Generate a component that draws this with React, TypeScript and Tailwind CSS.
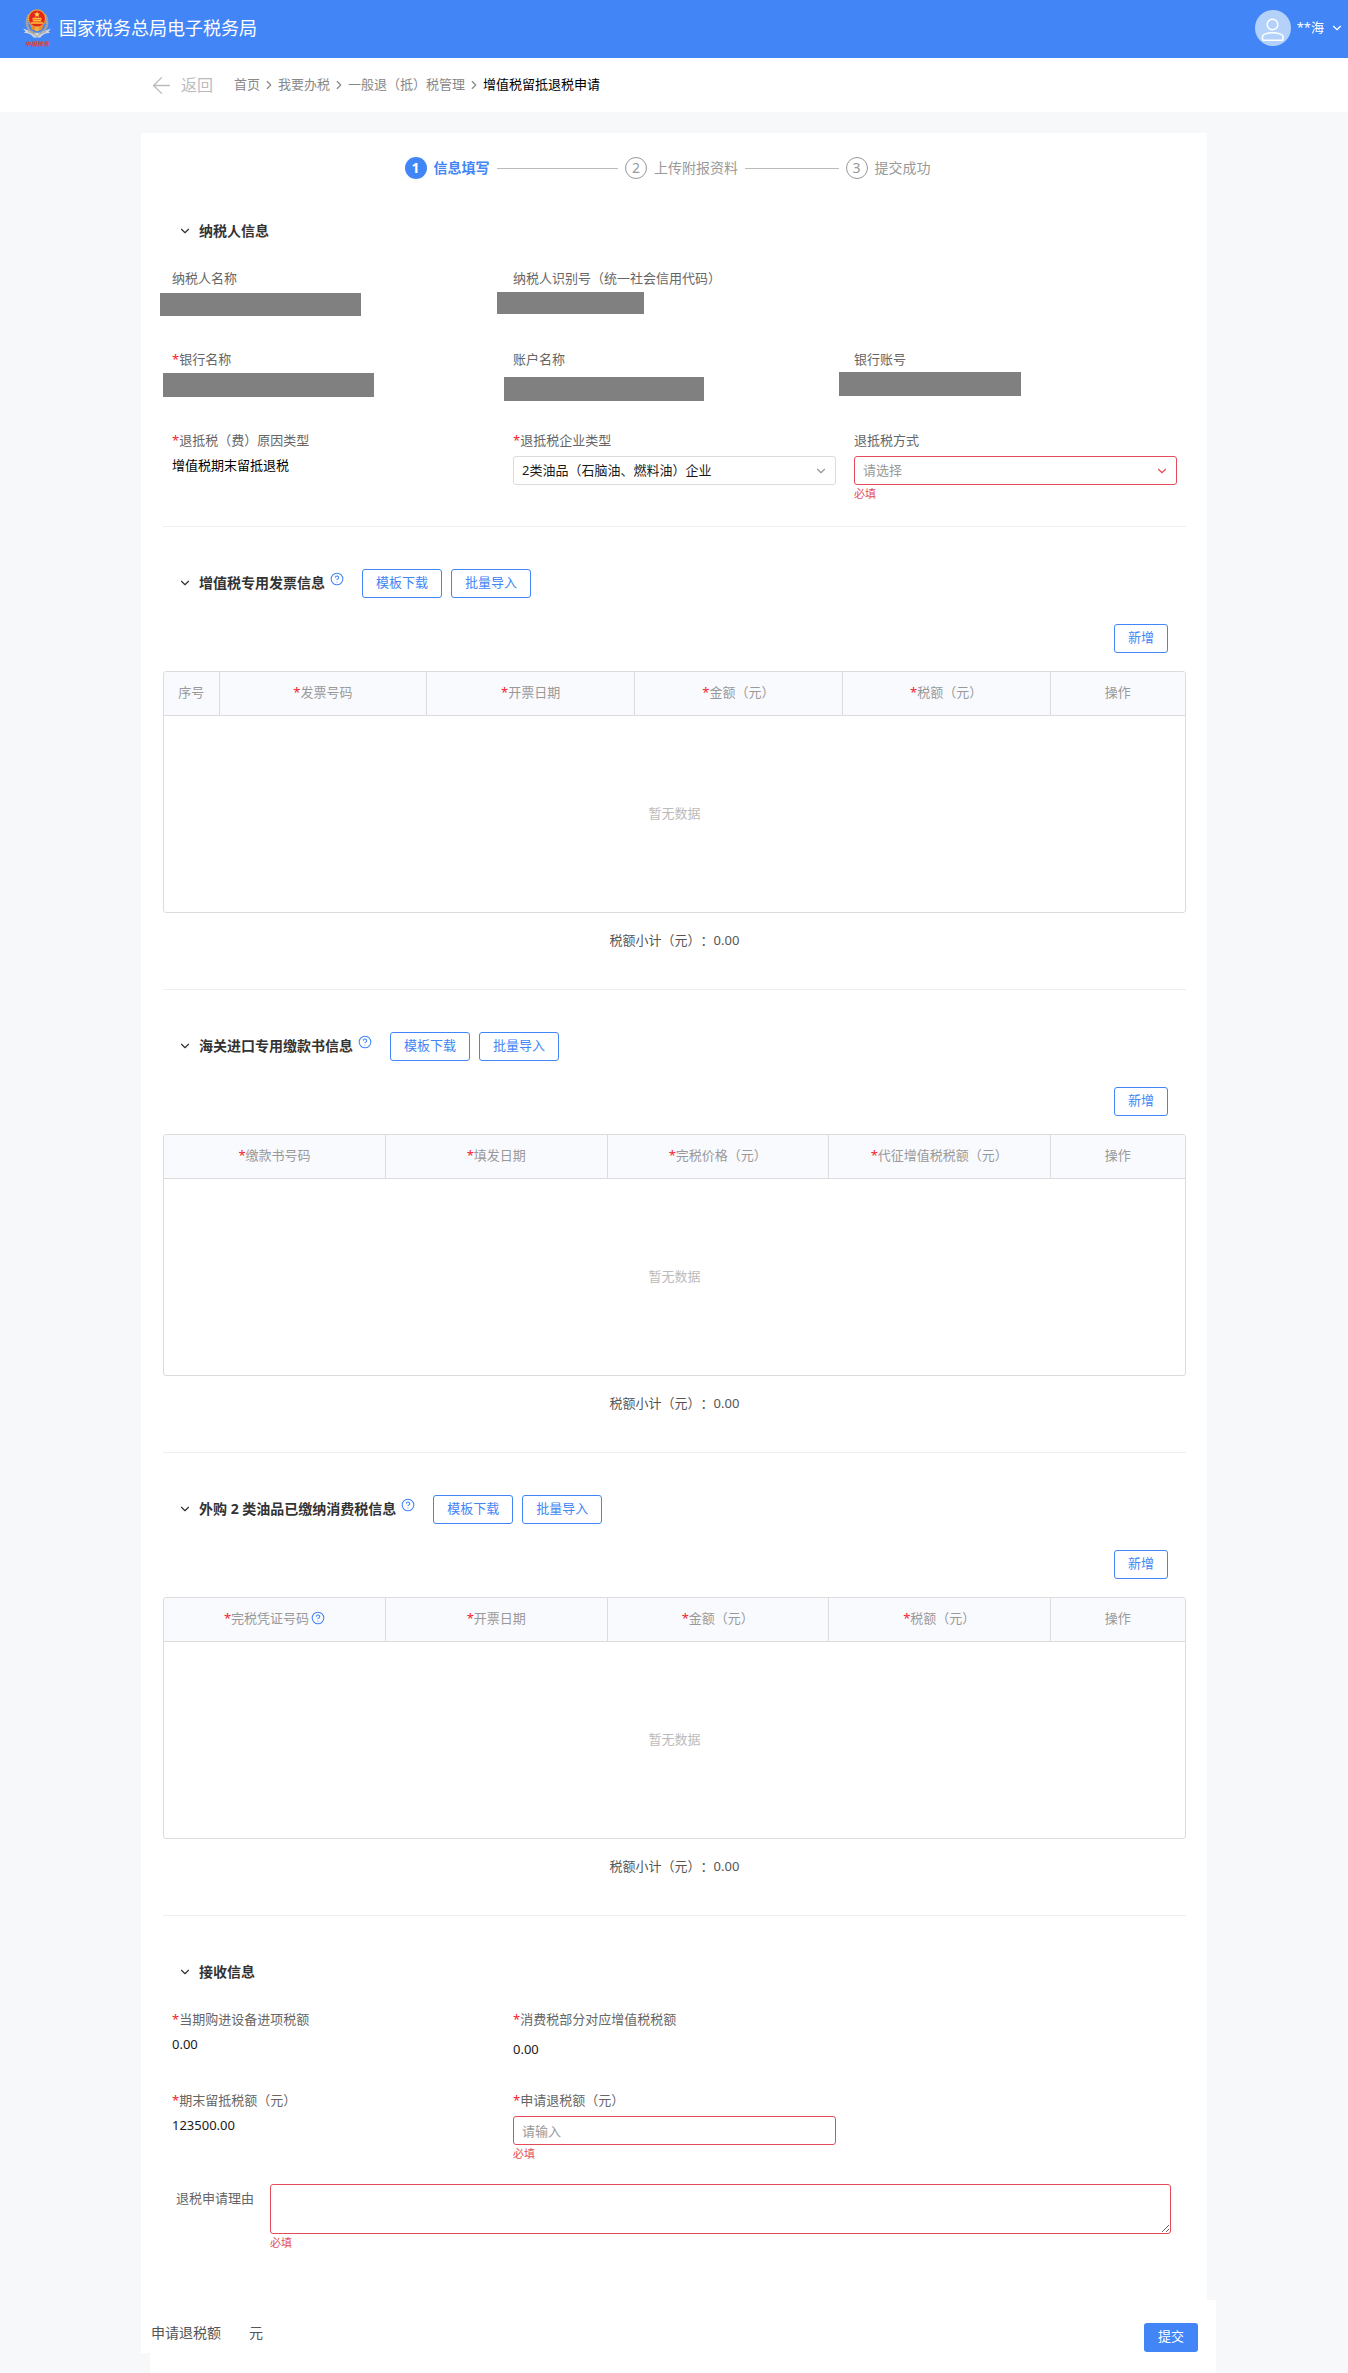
import React, { useId } from "react";
import { ArrowLeft, ChevronDown, ChevronRight, CircleHelp } from "lucide-react";

function Emblem() {
  return (
    <svg viewBox="0 0 28 38" className="h-[38px] w-7" role="img" aria-label="中国税务">
      <path
        d="M6 6C3 11 3 18 8 23L14 25.500L20 23C25 18 25 11 22 6"
        fill="none"
        stroke="#b9a98e"
        strokeWidth="2.600"
        strokeDasharray="1.600 .5"
      />
      <path
        d="M0 19.500C5 21 8 22.500 11 25L14 23.500L17 25C20 22.500 23 21 28 19.500L25.500 22.500L27 24C22 24 19 26 17.500 28.500H10.500C9 26 6 24 1 24L2.500 22.500Z"
        fill="#d3d6da"
      />
      <path d="M5 22.500C8 23.500 11 25 14 27.500C17 25 20 23.500 23 22.500" fill="none" stroke="#8f949c" strokeWidth=".8" />
      <circle cx="14" cy="9.500" r="9.200" fill="#f3a33a" />
      <circle cx="14" cy="9.500" r="8" fill="#e0271c" />
      <path d="M14 2.500l.9 1.900 2.100.2-1.600 1.400.5 2-1.900-1.100-1.900 1.100.5-2L11 4.600l2.100-.2z" fill="#ffd34d" />
      <path d="M9 10.500h10l-1-1.800h-8zM9.800 11h8.400v1.500H9.800zM8 13.200h12v1.600H8z" fill="#ffc23c" />
      <path d="M7.500 16.200c4 2.400 9 2.400 13 0l-1.500 4.300c-3 1.600-7 1.600-10 0z" fill="#f28a22" />
      <circle cx="14" cy="20" r="2.300" fill="#e9b44c" />
      <text x="14" y="36.500" textAnchor="middle" fontSize="6" fontWeight="700" fontStyle="italic" fill="#e0402f">
        中国税务
      </text>
    </svg>
  );
}

function Avatar() {
  return (
    <svg viewBox="0 0 36 36" className="size-9" aria-hidden="true">
      <circle cx="18" cy="18" r="18" fill="#b3d1f9" />
      <circle cx="17.500" cy="14.500" r="5.300" fill="none" stroke="#fff" strokeWidth="1.500" />
      <path
        d="M7.500 29.500V26.500C7.500 24.500 12 22.800 17.500 22.800S28 24.500 28 26.500V29.500Q28 30.200 27.300 30.200H8.200Q7.500 30.200 7.500 29.500Z"
        fill="none"
        stroke="#fff"
        strokeWidth="1.500"
      />
    </svg>
  );
}

const Star = () => <span className="text-[#f5222d]">*</span>;

function Step({ n, label, active, last }: { n: number; label: string; active?: boolean; last?: boolean }) {
  return (
    <li className={last ? "flex items-center gap-[7px]" : "flex flex-1 items-center gap-[7px] pr-[7px]"}>
      <span
        className={
          active
            ? "flex size-[22px] items-center justify-center rounded-full bg-[#4285f6] text-sm font-bold text-white"
            : "flex size-[22px] items-center justify-center rounded-full border border-[#999] text-sm text-[#999]"
        }
      >
        {n}
      </span>
      <span className={active ? "text-sm font-bold text-[#4285f6]" : "text-sm text-[#999]"}>{label}</span>
      {!last && <span className="h-px flex-1 bg-[#bbb]" />}
    </li>
  );
}

function SectionTitle({ children }: { children: React.ReactNode }) {
  return (
    <h2>
      <button type="button" aria-expanded="true" className="flex items-center gap-[7px] text-sm leading-5 font-bold text-[#333]">
        <ChevronDown size={14} strokeWidth={2} />
        {children}
      </button>
    </h2>
  );
}

function Label({ children, required, htmlFor }: { children: React.ReactNode; required?: boolean; htmlFor?: string }) {
  const Tag = htmlFor ? "label" : "div";
  return (
    <Tag htmlFor={htmlFor} className="block leading-5 text-[#666]">
      {required && <Star />}
      {children}
    </Tag>
  );
}

function SelectBox({ id, value, error }: { id: string; value: string; error?: boolean }) {
  return (
    <div className="relative mt-1.5">
      <select
        id={id}
        className={
          error
            ? "block h-[29px] w-full appearance-none rounded-[3px] border border-[#e34d59] bg-white px-2 pr-8 text-[#999]"
            : "block h-[29px] w-full appearance-none rounded-[3px] border border-[#dcdcdc] bg-white px-2 pr-8 text-[#1a1a1a]"
        }
      >
        <option>{value}</option>
      </select>
      <ChevronDown
        size={14}
        className={
          error
            ? "pointer-events-none absolute top-2 right-2 text-[#e34d59]"
            : "pointer-events-none absolute top-2 right-2 text-[#999]"
        }
      />
    </div>
  );
}

const ErrorText = () => <p className="mt-px text-[11px] leading-4 text-[#e34d59]">必填</p>;

function OutlineButton({ children }: { children: React.ReactNode }) {
  return (
    <button type="button" className="h-[29px] rounded-[3px] border border-[#4285f6] bg-white px-[13px] pb-0.5 text-[#4285f6]">
      {children}
    </button>
  );
}

type Column = { label: string; required?: boolean; help?: boolean; width?: string };

function InvoiceSection({ title, columns }: { title: string; columns: Column[] }) {
  return (
    <section className="border-b border-[#eee] pt-[42px] pb-[39px]">
      <div className="flex h-[29px] items-center pb-0.5 pl-[15px]">
        <SectionTitle>{title}</SectionTitle>
        <CircleHelp size={14} strokeWidth={1.8} className="mt-[3px] ml-[5px] self-start text-[#4285f6]" />
        <div className="ml-[18px] flex gap-[9px] pt-0.5">
          <OutlineButton>模板下载</OutlineButton>
          <OutlineButton>批量导入</OutlineButton>
        </div>
      </div>
      <div className="mt-[26px] flex justify-end pr-[18px]">
        <OutlineButton>新增</OutlineButton>
      </div>
      <div className="mt-[18px] overflow-hidden rounded-[3px] border border-[#dcdcdc]">
        <table className="w-full table-fixed text-center">
          <thead className="bg-[#f9fafe] text-[#999]">
            <tr className="h-[43px] border-b border-[#dcdcdc]">
              {columns.map((c) => (
                <th
                  key={c.label}
                  scope="col"
                  className={
                    (c.width ?? "") + " border-r border-[#dcdcdc] pb-0.5 font-normal last:border-r-0"
                  }
                >
                  <span className="inline-flex items-center">
                    {c.required && <Star />}
                    {c.label}
                    {c.help && <CircleHelp size={14} strokeWidth={1.8} className="ml-0.5 text-[#4285f6]" />}
                  </span>
                </th>
              ))}
            </tr>
          </thead>
          <tbody>
            <tr className="h-[197px]">
              <td colSpan={columns.length} className="text-[#bbb]">
                暂无数据
              </td>
            </tr>
          </tbody>
        </table>
      </div>
      <p className="mt-[17px] text-center leading-5 text-[#555]">税额小计（元）：0.00</p>
    </section>
  );
}

const invoiceColumns: Column[] = [
  { label: "序号", width: "w-[55px]" },
  { label: "发票号码", required: true },
  { label: "开票日期", required: true },
  { label: "金额（元）", required: true },
  { label: "税额（元）", required: true },
  { label: "操作", width: "w-[135px]" },
];
const customsColumns: Column[] = [
  { label: "缴款书号码", required: true },
  { label: "填发日期", required: true },
  { label: "完税价格（元）", required: true },
  { label: "代征增值税税额（元）", required: true },
  { label: "操作", width: "w-[135px]" },
];
const oilColumns: Column[] = [
  { label: "完税凭证号码", required: true, help: true },
  { label: "开票日期", required: true },
  { label: "金额（元）", required: true },
  { label: "税额（元）", required: true },
  { label: "操作", width: "w-[135px]" },
];

const crumbs = ["首页", "我要办税", "一般退（抵）税管理"];

export default function App() {
  const id = useId();
  return (
    <div className="min-h-screen bg-[#f7f8fa] font-['Noto_Sans','Noto_Sans_CJK_SC',sans-serif] text-[13px] [text-spacing-trim:space-all]">
      <header className="flex h-[58px] items-center bg-[#4285f6] pr-1 pb-0.5 pl-[23px] text-white">
        <Emblem />
        <h1 className="ml-2 text-lg leading-6">国家税务总局电子税务局</h1>
        <button type="button" className="ml-auto flex items-center">
          <Avatar />
          <span className="ml-1.5">**海</span>
          <ChevronDown size={14} className="ml-1.5" />
        </button>
      </header>

      <nav aria-label="面包屑" className="h-[54px] bg-white">
        <div className="mx-auto flex h-full max-w-[1066px] items-center pl-[7px] whitespace-nowrap text-[#888]">
          <a href="#back" className="flex items-center gap-1.5 text-base text-[#bbb]">
            <ArrowLeft size={27} strokeWidth={1.2} />
            返回
          </a>
          <ol className="ml-[21px] flex items-center">
            {crumbs.map((c) => (
              <li key={c} className="flex items-center">
                <a href="#crumb">{c}</a>
                <ChevronRight size={14} className="mx-0.5" />
              </li>
            ))}
            <li aria-current="page" className="text-black">
              增值税留抵退税申请
            </li>
          </ol>
        </div>
      </nav>

      <div className="mx-auto mt-[21px] max-w-[1066px]">
        <main className="bg-white pt-6 pr-[21px] pb-[102px] pl-[22px]">
          <ol className="mx-auto flex max-w-[540px] pr-[14px]">
            <Step n={1} label="信息填写" active />
            <Step n={2} label="上传附报资料" />
            <Step n={3} label="提交成功" last />
          </ol>

          <section className="border-b border-[#eee] pt-[42px] pb-[15px]">
            <div className="pl-[15px]">
              <SectionTitle>纳税人信息</SectionTitle>
            </div>
            <div className="mt-[27px] grid auto-rows-[81px] grid-cols-3 gap-x-[18px] pr-[9px] pl-[9px]">
              <div>
                <Label>纳税人名称</Label>
                <div className="mt-[5px] -ml-3 h-[23px] w-[201px] bg-[#808080]" />
              </div>
              <div className="col-span-2">
                <Label>纳税人识别号（统一社会信用代码）</Label>
                <div className="mt-1 -ml-4 h-[22px] w-[147px] bg-[#808080]" />
              </div>
              <div>
                <Label required>银行名称</Label>
                <div className="mt-1 -ml-[9px] h-6 w-[211px] bg-[#808080]" />
              </div>
              <div>
                <Label>账户名称</Label>
                <div className="mt-2 -ml-[9px] h-6 w-[200px] bg-[#808080]" />
              </div>
              <div>
                <Label>银行账号</Label>
                <div className="mt-[3px] -ml-[15px] h-6 w-[182px] bg-[#808080]" />
              </div>
              <div>
                <Label required>退抵税（费）原因类型</Label>
                <p className="mt-[5px] leading-5 text-black">增值税期末留抵退税</p>
              </div>
              <div>
                <Label required htmlFor={id + "type"}>
                  退抵税企业类型
                </Label>
                <SelectBox id={id + "type"} value="2类油品（石脑油、燃料油）企业" />
              </div>
              <div>
                <Label htmlFor={id + "mode"}>退抵税方式</Label>
                <SelectBox id={id + "mode"} value="请选择" error />
                <ErrorText />
              </div>
            </div>
          </section>

          <InvoiceSection title="增值税专用发票信息" columns={invoiceColumns} />
          <InvoiceSection title="海关进口专用缴款书信息" columns={customsColumns} />
          <InvoiceSection title="外购 2 类油品已缴纳消费税信息" columns={oilColumns} />

          <section className="pt-[46px]">
            <div className="pl-[15px]">
              <SectionTitle>接收信息</SectionTitle>
            </div>
            <div className="mt-[27px] grid auto-rows-[81px] grid-cols-3 gap-x-[18px] pr-[9px] pl-[9px]">
              <div>
                <Label required>当期购进设备进项税额</Label>
                <p className="mt-[5px] leading-5 text-[#1a1a1a]">0.00</p>
              </div>
              <div className="col-span-2">
                <Label required>消费税部分对应增值税税额</Label>
                <p className="mt-2.5 leading-5 text-[#1a1a1a]">0.00</p>
              </div>
              <div>
                <Label required>期末留抵税额（元）</Label>
                <p className="mt-[5px] leading-5 text-[#1a1a1a]">123500.00</p>
              </div>
              <div>
                <Label required htmlFor={id + "amount"}>
                  申请退税额（元）
                </Label>
                <input
                  id={id + "amount"}
                  type="text"
                  placeholder="请输入"
                  className="mt-1.5 block h-[29px] w-full rounded-[3px] border border-[#e34d59] px-2 placeholder:text-[#999]"
                />
                <ErrorText />
              </div>
            </div>
            <div className="mt-[13px] flex pr-[15px] pl-[13px]">
              <label htmlFor={id + "reason"} className="mt-1 w-[94px] leading-5 text-[#666]">
                退税申请理由
              </label>
              <div className="flex-1">
                <textarea
                  id={id + "reason"}
                  className="block h-[50px] w-full resize rounded-[3px] border border-[#e34d59] px-2 py-1"
                />
                <ErrorText />
              </div>
            </div>
          </section>
        </main>

        <footer className="relative -mt-[53px] -mr-[9px] ml-[9px] flex h-[73px] items-start bg-white pr-[18px] pl-px">
          <p className="mt-[23px] text-sm leading-5 text-[#555]">
            申请退税额<span className="ml-7">元</span>
          </p>
          <button type="submit" className="mt-[23px] ml-auto h-[29px] rounded-[3px] bg-[#4285f6] px-3.5 pb-0.5 text-white">
            提交
          </button>
        </footer>
      </div>
    </div>
  );
}
